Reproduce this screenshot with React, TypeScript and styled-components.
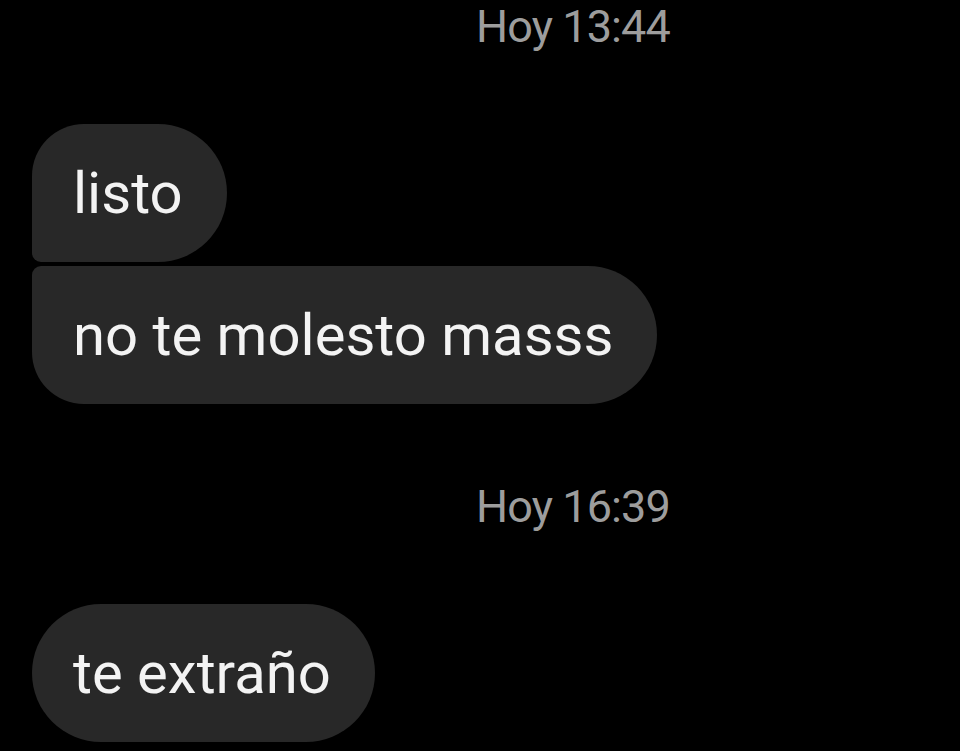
import React from "react";
import styled, { createGlobalStyle } from "styled-components";

const Global = createGlobalStyle`
  html, body { margin: 0; padding: 0; background: #000; }
  body { font-family: Roboto, "Noto Sans", sans-serif; }
`;

const Page = styled.div`
  width: 960px;
  height: 751px;
  overflow: hidden;
  background: #000;
  box-sizing: border-box;
  padding: 4px 0 0 32px;
  display: flex;
  flex-direction: column;
  align-items: flex-start;
`;

const Timestamp = styled.div<{ $after: number }>`
  margin-top: ${(p) => p.$after}px;
  margin-left: 444px;
  height: 46px;
  font-size: 45px;
  line-height: 46px;
  color: #9d9d9d;
  letter-spacing: -0.9px;
  white-space: nowrap;
`;

type Shape = "first" | "last" | "single";

const radii: Record<Shape, string> = {
  first: "52px 69px 69px 9px",
  last: "9px 69px 69px 52px",
  single: "69px",
};

const Bubble = styled.div<{ $shape: Shape; $gap: number }>`
  margin-top: ${(p) => p.$gap}px;
  height: 138px;
  box-sizing: border-box;
  padding: 0 44px 0 41px;
  display: flex;
  align-items: center;
  background: #282828;
  color: #f3f3f3;
  font-size: 58px;
  line-height: 58px;
  border-radius: ${(p) => radii[p.$shape]};
  white-space: nowrap;
`;

export default function App() {
  return (
    <>
      <Global />
      <Page>
        <Timestamp $after={0}>Hoy 13:44</Timestamp>
        <Bubble $shape="first" $gap={74}>listo</Bubble>
        <Bubble $shape="last" $gap={4}>no te molesto masss</Bubble>
        <Timestamp $after={80}>Hoy 16:39</Timestamp>
        <Bubble $shape="single" $gap={74}>te extraño</Bubble>
      </Page>
    </>
  );
}
